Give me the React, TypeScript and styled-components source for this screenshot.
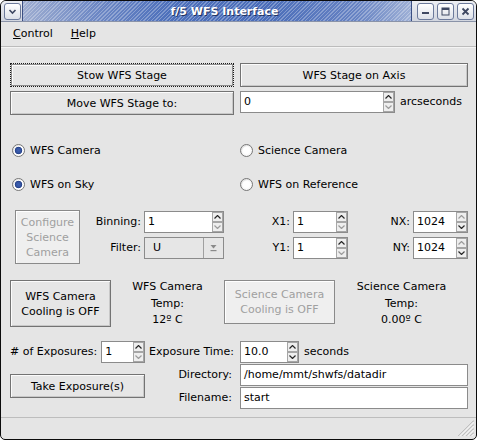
import React from "react";
import styled, { createGlobalStyle, css } from "styled-components";

const FONT = `"DejaVu Sans", "Liberation Sans", sans-serif`;

const GlobalStyle = createGlobalStyle`
  html, body { margin: 0; padding: 0; background: #ffffff; }
  body { font-family: ${FONT}; font-size: 11px; }
  * { box-sizing: border-box; }
`;

const Window = styled.div`
  width: 477px;
  height: 440px;
  border: 1px solid #0b0b0b;
  border-radius: 6px 6px 5px 5px;
  background: #e5e5e5;
  overflow: hidden;
  display: flex;
  flex-direction: column;
  font-family: ${FONT};
  font-size: 11px;
  color: #000;
`;

/* ---------- title bar ---------- */
const TitleBar = styled.header`
  flex: none;
  height: 21px;
  display: flex;
  background: linear-gradient(#eceef3, #d2d6df);
  border-bottom: 1px solid #8a93a8;
`;

const TitleControls = styled.div<{ $side: "left" | "right" }>`
  display: flex;
  align-items: center;
  gap: 3px;
  padding: ${(p) => (p.$side === "left" ? "0 1px 0 3px" : "0 2px 0 5px")};
`;

const TitleButton = styled.span`
  width: 17px;
  height: 17px;
  border: 1px solid #6c7a9b;
  border-radius: 3px;
  background: linear-gradient(#ffffff, #dde1e9);
  display: flex;
  align-items: center;
  justify-content: center;
  color: #3e4862;
`;

const TitleStripe = styled.div`
  flex: 1;
  display: flex;
  align-items: center;
  justify-content: center;
  padding-left: 15px;
  border-left: 1px solid #3b4f82;
  border-right: 1px solid #3b4f82;
  background:
    repeating-linear-gradient(
      135deg,
      rgba(255, 255, 255, 0.28) 0px,
      rgba(255, 255, 255, 0.28) 1px,
      rgba(255, 255, 255, 0) 1px,
      rgba(255, 255, 255, 0) 2.6px
    ),
    linear-gradient(
      90deg,
      #9eadd0 0%,
      #6f89c5 18%,
      #4d70bb 38%,
      #4a6db9 62%,
      #6783c3 86%,
      #9eb0d6 100%
    );
`;

const TitleText = styled.span`
  color: #fff;
  font-weight: bold;
  font-size: 11px;
  text-shadow: 1px 1px 0 #223462;
  white-space: nowrap;
`;

/* ---------- menu ---------- */
const MenuBar = styled.nav`
  flex: none;
  height: 24px;
  display: flex;
  align-items: center;
  padding-left: 3px;
`;

const MenuItem = styled.span`
  padding: 0 9px;
  line-height: 24px;
`;

const Mnemonic = styled.span`
  text-decoration: underline;
`;

const Rule = styled.div`
  flex: none;
  height: 2px;
  border-top: 1px solid #bcbcbc;
  border-bottom: 1px solid #f4f4f4;
`;

/* ---------- content ---------- */
const Content = styled.main`
  flex: 1;
  padding: 15px 8px 0 9px;
  display: flex;
  flex-direction: column;
`;

const PushButton = styled.button<{ $focus?: boolean; $w?: number; $h?: number }>`
  font: inherit;
  color: #000;
  margin: 0;
  padding: 0 4px;
  height: ${(p) => p.$h ?? 24}px;
  width: ${(p) => (p.$w ? `${p.$w}px` : "100%")};
  background: #e6e6e6;
  border: 1px solid #737373;
  box-shadow: inset 1px 1px 0 #fbfbfb, inset -1px -1px 0 #c8c8c8;
  line-height: 15px;
  text-align: center;
  ${(p) =>
    p.$focus &&
    css`
      border: 1px dotted #1a1a1a;
      box-shadow: inset 0 0 0 1px #8c8c8c, inset 2px 2px 0 #fbfbfb;
    `}
  &:disabled {
    color: #a0a0a0;
    background: #efefef;
    border-color: #8a8a8a;
    box-shadow: inset 1px 1px 0 #ffffff;
  }
`;

const StageGrid = styled.section`
  display: grid;
  grid-template-columns: 224px 228px;
  grid-auto-rows: 24px;
  column-gap: 6px;
  row-gap: 4px;
`;

const InlineRow = styled.div`
  display: flex;
  align-items: flex-start;
  gap: 5px;
`;

const Unit = styled.span`
  line-height: 22px;
`;

/* spin box */
const SpinFrame = styled.div<{ $w: number }>`
  width: ${(p) => p.$w}px;
  height: 22px;
  display: flex;
  background: #fff;
  border: 1px solid #8b8b8b;
`;

const SpinValue = styled.span`
  flex: 1;
  padding-left: 3px;
  line-height: 20px;
  white-space: nowrap;
  overflow: hidden;
`;

const SpinArrows = styled.span`
  width: 11px;
  display: flex;
  flex-direction: column;
`;

const SpinArrow = styled.span<{ $off?: boolean }>`
  flex: 1;
  display: flex;
  align-items: center;
  justify-content: center;
  border: 1px solid #a6a6a6;
  background: #eeeeee;
  color: ${(p) => (p.$off ? "#9c9c9c" : "#262626")};
`;

const Chevron = ({ up }: { up?: boolean }) => (
  <svg width="7" height="4" viewBox="0 0 7 4">
    <polyline
      points={up ? "0.5,3.5 3.5,0.5 6.5,3.5" : "0.5,0.5 3.5,3.5 6.5,0.5"}
      fill="none"
      stroke="currentColor"
      strokeWidth="1.2"
    />
  </svg>
);

const SpinBox = ({
  value,
  w,
  upOff,
  downOff,
}: {
  value: string;
  w: number;
  upOff?: boolean;
  downOff?: boolean;
}) => (
  <SpinFrame $w={w}>
    <SpinValue>{value}</SpinValue>
    <SpinArrows>
      <SpinArrow $off={upOff}>
        <Chevron up />
      </SpinArrow>
      <SpinArrow $off={downOff}>
        <Chevron />
      </SpinArrow>
    </SpinArrows>
  </SpinFrame>
);

const Entry = styled.div`
  height: 22px;
  background: #fff;
  border: 1px solid #8b8b8b;
  padding-left: 3px;
  line-height: 20px;
  white-space: nowrap;
`;

/* combo */
const Combo = styled.div`
  height: 22px;
  display: flex;
  background: #e6e6e6;
  border: 1px solid #8b8b8b;
`;

const ComboValue = styled.span`
  flex: 1;
  padding-left: 8px;
  line-height: 20px;
`;

const ComboButton = styled.span`
  width: 20px;
  border-left: 1px solid #a0a0a0;
  display: flex;
  align-items: center;
  justify-content: center;
  color: #8a8a8a;
`;

/* radios */
const RadioGrid = styled.section`
  margin: 25px 0 0 2px;
  display: grid;
  grid-template-columns: 228px 228px;
  grid-auto-rows: 20px;
  row-gap: 14px;
`;

const RadioLabel = styled.label`
  display: flex;
  align-items: center;
  gap: 5px;
`;

const RadioDot = styled.span<{ $checked?: boolean }>`
  width: 13px;
  height: 13px;
  border-radius: 50%;
  border: 1px solid #777;
  background: ${(p) =>
    p.$checked
      ? "radial-gradient(circle, #3e60b2 0, #34539f 2.6px, #243f86 3.4px, #ffffff 4.1px)"
      : "radial-gradient(circle, #ffffff 0, #ffffff 3px, #f2f2f2 6px)"};
  box-shadow: inset 1px 1px 0 rgba(0, 0, 0, 0.08);
`;

const Radio = ({ label, checked }: { label: string; checked?: boolean }) => (
  <RadioLabel>
    <RadioDot $checked={checked} />
    <span>{label}</span>
  </RadioLabel>
);

/* config */
const ConfigSection = styled.section`
  margin: 16px 0 0 5px;
  display: flex;
  align-items: flex-start;
`;

const FieldGrid = styled.div`
  margin: 1px 0 0 3px;
  display: grid;
  grid-template-columns: 58px 80px 63px 55px 59px 55px;
  grid-auto-rows: 22px;
  column-gap: 3px;
  row-gap: 4px;
  align-items: center;
`;

const FieldLabel = styled.span`
  text-align: right;
  line-height: 22px;
  white-space: nowrap;
`;

/* cooling */
const CoolingSection = styled.section`
  margin-top: 16px;
  display: grid;
  grid-template-columns: 101px 113px 111px 133px;
  align-items: start;
`;

const TempLabel = styled.div`
  text-align: center;
  line-height: 16.5px;
  margin-top: -1px;
  white-space: nowrap;
`;

/* exposure */
const ExposureGrid = styled.section`
  margin-top: 12px;
  display: grid;
  grid-template-columns: 135px 87px 228px;
  grid-template-rows: 22px 22px 22px;
  column-gap: 4px;
  row-gap: 1px;
`;

const CountCell = styled.div`
  display: flex;
  align-items: center;
  gap: 4px;
  white-space: nowrap;
`;

const GridButton = styled(PushButton)`
  grid-column: 1;
  grid-row: 2 / span 2;
  align-self: center;
`;

const RightLabel = styled.span`
  text-align: right;
  padding-right: 4px;
  line-height: 22px;
  white-space: nowrap;
`;

/* status */
const StatusBar = styled.footer`
  flex: none;
  height: 22px;
  border-top: 1px solid #bdbdbd;
  display: flex;
  justify-content: flex-end;
  align-items: flex-end;
  padding: 0 2px 3px 0;
`;

const Grip = () => (
  <svg width="16" height="16" viewBox="0 0 16 16">
    {[0, 4, 8, 12].map((o) => (
      <g key={o}>
        <line x1={16} y1={o + 0.5} x2={o + 0.5} y2={16} stroke="#9a9a9a" strokeWidth="1" />
        <line x1={16} y1={o + 1.5} x2={o + 1.5} y2={16} stroke="#ffffff" strokeWidth="1" />
      </g>
    ))}
  </svg>
);

export default function App() {
  return (
    <>
      <GlobalStyle />
      <Window>
        <TitleBar>
          <TitleControls $side="left">
            <TitleButton>
              <svg width="11" height="11" viewBox="0 0 11 11">
                <polyline points="2.5,4 5.5,7 8.5,4" fill="none" stroke="currentColor" strokeWidth="1.6" />
              </svg>
            </TitleButton>
          </TitleControls>
          <TitleStripe>
            <TitleText>f/5 WFS Interface</TitleText>
          </TitleStripe>
          <TitleControls $side="right">
            <TitleButton>
              <svg width="11" height="11" viewBox="0 0 11 11">
                <rect x="2" y="6" width="7" height="2" fill="currentColor" />
              </svg>
            </TitleButton>
            <TitleButton>
              <svg width="11" height="11" viewBox="0 0 11 11">
                <rect x="2" y="2" width="7" height="7" fill="none" stroke="currentColor" strokeWidth="1" />
                <rect x="2" y="2" width="7" height="2" fill="currentColor" />
              </svg>
            </TitleButton>
            <TitleButton>
              <svg width="11" height="11" viewBox="0 0 11 11">
                <path d="M2.5 2.5 L8.5 8.5 M8.5 2.5 L2.5 8.5" stroke="currentColor" strokeWidth="1.8" />
              </svg>
            </TitleButton>
          </TitleControls>
        </TitleBar>

        <MenuBar>
          <MenuItem>
            <Mnemonic>C</Mnemonic>ontrol
          </MenuItem>
          <MenuItem>
            <Mnemonic>H</Mnemonic>elp
          </MenuItem>
        </MenuBar>
        <Rule />

        <Content>
          <StageGrid>
            <PushButton $focus>Stow WFS Stage</PushButton>
            <PushButton>WFS Stage on Axis</PushButton>
            <PushButton>Move WFS Stage to:</PushButton>
            <InlineRow>
              <SpinBox value="0" w={155} downOff />
              <Unit>arcseconds</Unit>
            </InlineRow>
          </StageGrid>

          <RadioGrid>
            <Radio label="WFS Camera" checked />
            <Radio label="Science Camera" />
            <Radio label="WFS on Sky" checked />
            <Radio label="WFS on Reference" />
          </RadioGrid>

          <ConfigSection>
            <PushButton $w={65} $h={54} disabled>
              Configure
              <br />
              Science
              <br />
              Camera
            </PushButton>
            <FieldGrid>
              <FieldLabel>Binning:</FieldLabel>
              <SpinBox value="1" w={80} downOff />
              <FieldLabel>X1:</FieldLabel>
              <SpinBox value="1" w={55} downOff />
              <FieldLabel>NX:</FieldLabel>
              <SpinBox value="1024" w={55} upOff />

              <FieldLabel>Filter:</FieldLabel>
              <Combo>
                <ComboValue>U</ComboValue>
                <ComboButton>
                  <svg width="7" height="8" viewBox="0 0 7 8">
                    <path d="M0.5 1 L6.5 1 L3.5 4.5 Z" fill="currentColor" />
                    <rect x="0.5" y="6" width="6" height="1.2" fill="currentColor" />
                  </svg>
                </ComboButton>
              </Combo>
              <FieldLabel>Y1:</FieldLabel>
              <SpinBox value="1" w={55} downOff />
              <FieldLabel>NY:</FieldLabel>
              <SpinBox value="1024" w={55} upOff />
            </FieldGrid>
          </ConfigSection>

          <CoolingSection>
            <PushButton $h={47}>
              WFS Camera
              <br />
              Cooling is OFF
            </PushButton>
            <TempLabel>
              WFS Camera
              <br />
              Temp:
              <br />
              12º C
            </TempLabel>
            <PushButton $h={44} disabled>
              Science Camera
              <br />
              Cooling is OFF
            </PushButton>
            <TempLabel>
              Science Camera
              <br />
              Temp:
              <br />
              0.00º C
            </TempLabel>
          </CoolingSection>

          <ExposureGrid>
            <CountCell>
              <span># of Exposures:</span>
              <SpinBox value="1" w={44} downOff />
            </CountCell>
            <RightLabel>Exposure Time:</RightLabel>
            <InlineRow>
              <SpinBox value="10.0" w={59} />
              <Unit>seconds</Unit>
            </InlineRow>

            <GridButton $w={135}>Take Exposure(s)</GridButton>
            <RightLabel>Directory:</RightLabel>
            <Entry>/home/mmt/shwfs/datadir</Entry>
            <RightLabel>Filename:</RightLabel>
            <Entry>start</Entry>
          </ExposureGrid>
        </Content>

        <StatusBar>
          <Grip />
        </StatusBar>
      </Window>
    </>
  );
}
